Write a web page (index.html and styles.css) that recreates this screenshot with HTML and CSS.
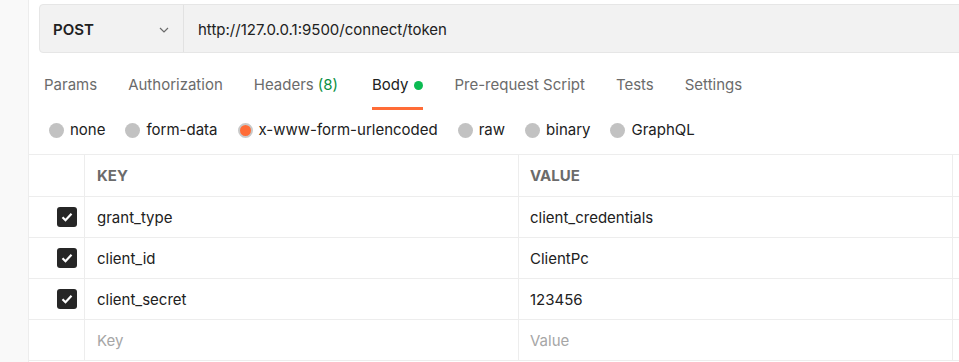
FILE: index.html
```html
<!DOCTYPE html>
<html lang="en">
<head>
    <meta charset="UTF-8">
    <title>POST connect/token</title>
    <link rel="stylesheet" href="styles.css">
</head>
<body>
    <div class="sidebar"></div>
    <div class="main">
        <div class="url-bar">
            <div class="method">
                <span>POST</span>
                <svg class="chevron" width="10" height="6" viewBox="0 0 10 6"><path d="M1 1l4 4 4-4" fill="none" stroke="#6b6b6b" stroke-width="1.2"/></svg>
            </div>
            <div class="url">http://127.0.0.1:9500/connect/token</div>
        </div>

        <div class="tabs">
            <div class="tab">Params</div>
            <div class="tab">Authorization</div>
            <div class="tab">Headers <span class="count">(8)</span></div>
            <div class="tab active">Body <span class="dot"></span></div>
            <div class="tab">Pre-request Script</div>
            <div class="tab">Tests</div>
            <div class="tab">Settings</div>
        </div>

        <div class="body-types">
            <label class="radio"><span class="circle"></span>none</label>
            <label class="radio"><span class="circle"></span>form-data</label>
            <label class="radio"><span class="circle selected"></span>x-www-form-urlencoded</label>
            <label class="radio"><span class="circle"></span>raw</label>
            <label class="radio"><span class="circle"></span>binary</label>
            <label class="radio"><span class="circle"></span>GraphQL</label>
        </div>

        <div class="kv-table">
            <div class="cell head"></div>
            <div class="cell head key">KEY</div>
            <div class="cell head value">VALUE</div>
            <div class="cell head extra"></div>

            <div class="cell check"><span class="checkbox"><svg width="12" height="10" viewBox="0 0 12 10"><path d="M1.5 5.2l3 3 6-6.4" fill="none" stroke="#fff" stroke-width="2.2"/></svg></span></div>
            <div class="cell key">grant_type</div>
            <div class="cell value">client_credentials</div>
            <div class="cell extra"></div>

            <div class="cell check"><span class="checkbox"><svg width="12" height="10" viewBox="0 0 12 10"><path d="M1.5 5.2l3 3 6-6.4" fill="none" stroke="#fff" stroke-width="2.2"/></svg></span></div>
            <div class="cell key">client_id</div>
            <div class="cell value">ClientPc</div>
            <div class="cell extra"></div>

            <div class="cell check"><span class="checkbox"><svg width="12" height="10" viewBox="0 0 12 10"><path d="M1.5 5.2l3 3 6-6.4" fill="none" stroke="#fff" stroke-width="2.2"/></svg></span></div>
            <div class="cell key">client_secret</div>
            <div class="cell value">123456</div>
            <div class="cell extra"></div>

            <div class="cell check"></div>
            <div class="cell key placeholder">Key</div>
            <div class="cell value placeholder">Value</div>
            <div class="cell extra"></div>
        </div>
    </div>
</body>
</html>
```

FILE: styles.css
```css
* {
    box-sizing: border-box;
    margin: 0;
    padding: 0;
}
body {
    font-family: 'Inter', 'Open Sans', sans-serif;
    font-size: 15px;
    color: #212121;
    background: #fff;
    display: flex;
    height: 362px;
    overflow: hidden;
}
.sidebar {
    width: 29px;
    flex-shrink: 0;
    background: #f9f9f9;
    border-right: 1px solid #ededed;
}
.main {
    flex: 1;
    min-width: 0;
    padding-top: 4px;
    overflow: hidden;
}
.url-bar {
    display: flex;
    height: 49px;
    margin-left: 10px;
    margin-right: -20px;
    background: #f2f2f2;
    border: 1px solid #e6e6e6;
    border-radius: 4px;
}
.method {
    width: 144px;
    display: flex;
    align-items: center;
    justify-content: space-between;
    padding: 2px 14px 0 13px;
    border-right: 1px solid #e2e2e2;
    font-weight: 600;
}
.url {
    display: flex;
    align-items: center;
    padding: 2px 0 0 14px;
}
.tabs {
    display: flex;
    gap: 31px;
    padding-left: 15px;
}
.tab {
    padding: 22px 0 12px;
    line-height: 20px;
    color: #6b6b6b;
    border-bottom: 3px solid transparent;
    display: flex;
    align-items: center;
}
.tab .count {
    color: #0a8f42;
    margin-left: 4px;
    margin-right: 3px;
}
.tab.active {
    color: #212121;
    border-bottom-color: #ff6c37;
}
.dot {
    width: 9px;
    height: 9px;
    border-radius: 50%;
    background: #0cbb52;
    margin-left: 6px;
}
.body-types {
    display: flex;
    gap: 20px;
    padding: 10px 0 14px 20px;
}
.radio {
    display: flex;
    align-items: center;
    line-height: 20px;
}
.circle {
    width: 15px;
    height: 15px;
    border-radius: 50%;
    background: #c2c2c2;
    margin-right: 6px;
}
.circle.selected {
    background: #ff6c37;
    border: 2px solid #c9c9c9;
}
.kv-table {
    display: grid;
    grid-template-columns: 56px 434px 434px 1fr;
    grid-template-rows: 42px repeat(4, 41px);
    border-top: 1px solid #ededed;
}
.cell {
    display: flex;
    align-items: center;
    border-right: 1px solid #ededed;
    border-bottom: 1px solid #ededed;
}
.cell.key {
    padding-left: 12px;
}
.cell.value {
    padding-left: 11px;
}
.cell.head {
    font-weight: 700;
    color: #6b6b6b;
}
.cell.extra {
    border-right: none;
}
.cell.check {
    padding-left: 28px;
}
.checkbox {
    width: 20px;
    height: 20px;
    border-radius: 3px;
    background: #262626;
    display: flex;
    align-items: center;
    justify-content: center;
}
.placeholder {
    color: #a6a6a6;
}
```
